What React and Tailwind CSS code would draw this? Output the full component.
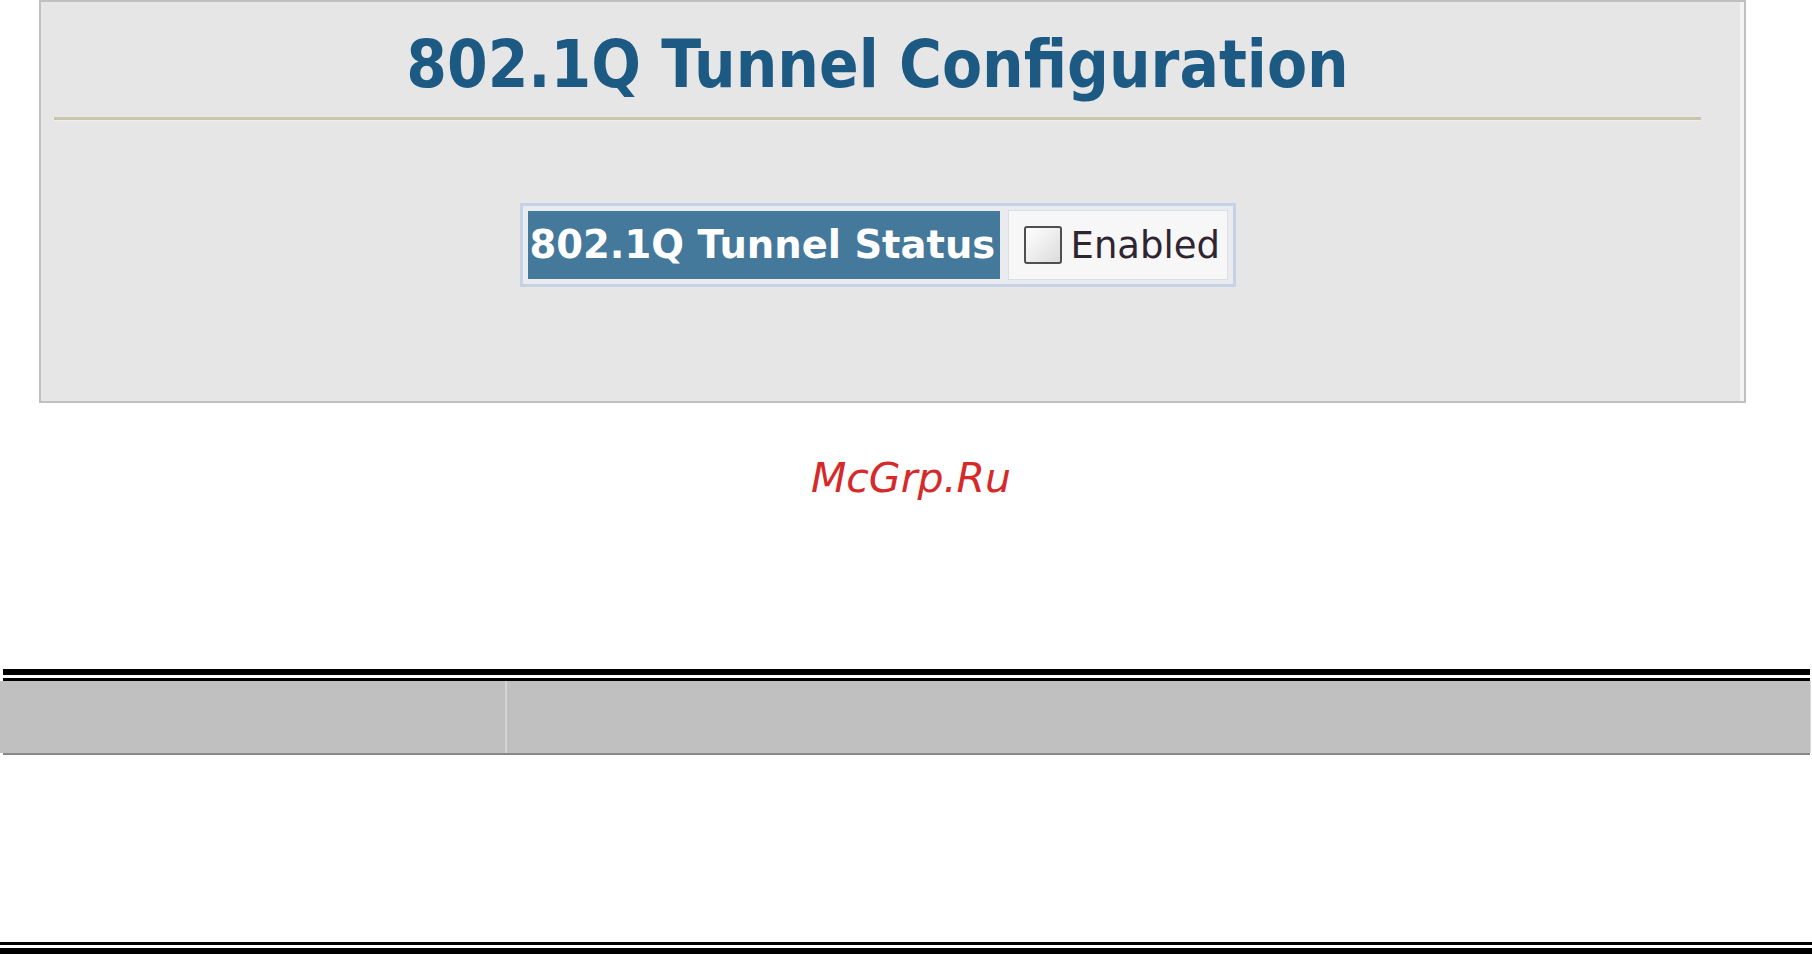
export default function App() {
  return (
    <div className="w-[1812px] h-[954px] bg-white overflow-hidden font-['DejaVu_Sans',sans-serif]">
      {/* config panel */}
      <div className="ml-[39px] w-[1707px] h-[403px] border-2 border-[#c0c0c0] bg-[#e6e6e6] flex">
        <div className="flex-1 flex flex-col">
          <div className="ml-[13px] w-[1647px] flex flex-col items-center">
            <h1 className="mt-[31px] h-[64px] leading-[64px] text-[65px] font-bold text-[#1c5a84] font-['DejaVu_Sans_Condensed','DejaVu_Sans',sans-serif] whitespace-nowrap">
              802.1Q Tunnel Configuration
            </h1>
            <div className="mt-[20px] w-full h-[3px] bg-[#c9c5ad]" />
            <div className="w-full h-px bg-[#f0f0ee]" />
            <div className="mt-[82px] flex gap-[8px] p-[5px] border-[3px] border-[#c6d3e6] bg-[#e9ebef]">
              <div className="h-[68px] w-[472px] bg-[#45799b] flex items-center pl-[2px] text-[38.5px] font-bold text-white whitespace-nowrap">
                802.1Q Tunnel Status
              </div>
              <label className="h-[70px] -my-px w-[220px] bg-[#f7f7f8] border border-[#d9dee7] flex items-center pl-[15px] gap-[9px]">
                <input type="checkbox" className="appearance-none w-[38px] h-[38px] rounded-[3px] border-2 border-[#4f4f4f] bg-gradient-to-br from-white to-[#dcdcdc]" />
                <span className="text-[37px] leading-none text-[#2f2531] whitespace-nowrap">Enabled</span>
              </label>
            </div>
          </div>
        </div>
        <div className="w-[4px] bg-[#f3f3f3]" />
      </div>

      {/* watermark */}
      <div className="mt-[55px] flex justify-center pl-[10px]">
        <span className="h-[40px] leading-[40px] text-[41px] italic text-[#d62a2a]">McGrp.Ru</span>
      </div>

      {/* table header */}
      <div className="mt-[171px]">
        <div className="ml-[3px] w-[1807px] h-[6px] bg-black" />
        <div className="ml-[3px] mt-[3px] w-[1807px] h-[3px] bg-black" />
        <div className="w-[1811px] h-[72px] bg-[#c0c0c0] flex">
          <div className="w-[505px] h-full" />
          <div className="w-[2px] h-full bg-[#d4d4d4]" />
          <div className="flex-1 h-full" />
          <div className="w-px h-full bg-[#dadada]" />
        </div>
        <div className="ml-[3px] w-[1807px] h-[2px] bg-[#888888]" />
      </div>

      {/* bottom rule */}
      <div className="mt-[187px]">
        <div className="w-full h-[3px] bg-black" />
        <div className="mt-[3px] w-full h-[6px] bg-black" />
      </div>
    </div>
  );
}
